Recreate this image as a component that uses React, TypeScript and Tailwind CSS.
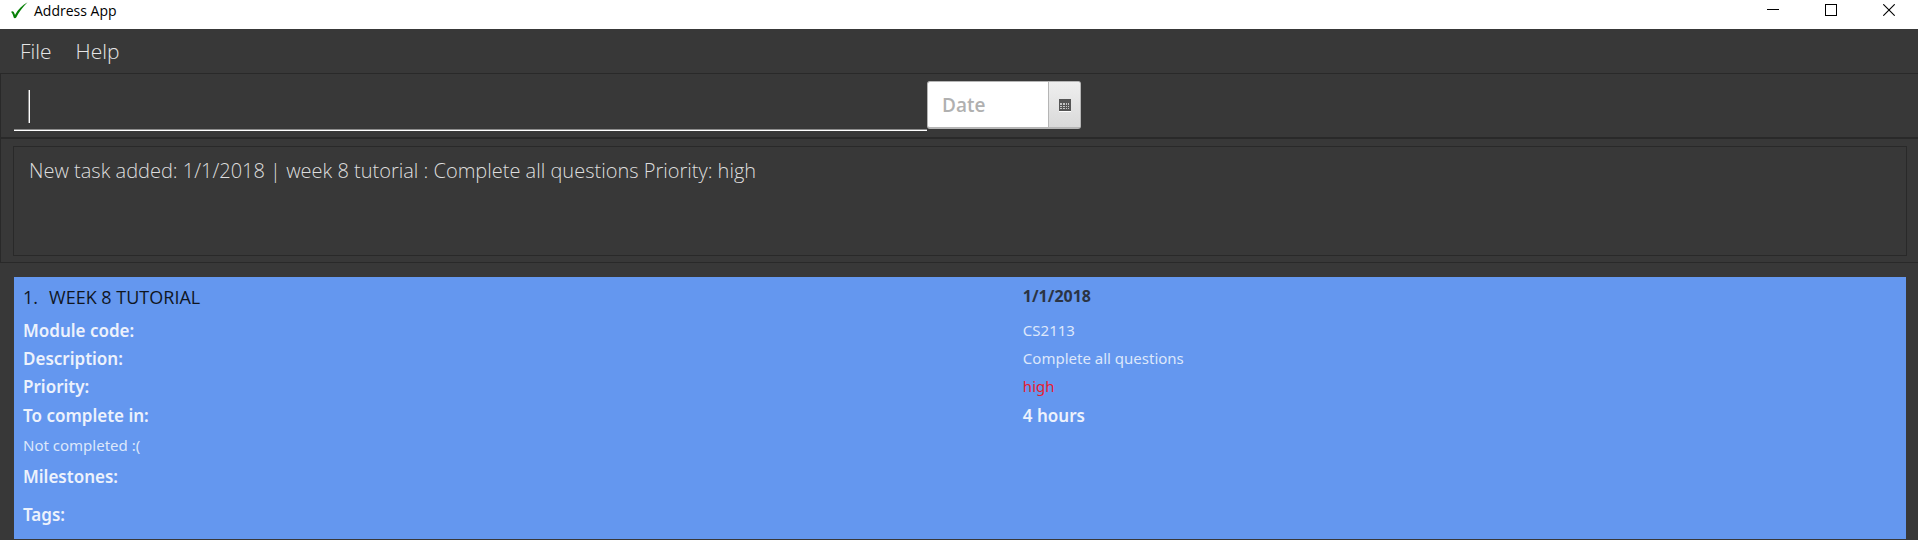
import { useState } from "react";

type Detail = {
  label: string;
  value?: string;
  rowClass: string;
  labelClass: string;
  valueClass: string;
};

const strong = "font-['Noto_Sans',sans-serif] text-[17px] font-semibold text-[#edf2fc]";
const plain = "font-['Noto_Sans',sans-serif] text-[15px] pb-0.5 text-[#dde7fb]";
const urgent = "font-['Noto_Sans',sans-serif] text-[15px] pb-0.5 text-[#e81c2e]";

const details: Detail[] = [
  { label: "Module code:", value: "CS2113", rowClass: "h-7", labelClass: strong, valueClass: plain },
  { label: "Description:", value: "Complete all questions", rowClass: "h-7", labelClass: strong, valueClass: plain },
  { label: "Priority:", value: "high", rowClass: "h-7", labelClass: strong, valueClass: urgent },
  { label: "To complete in:", value: "4 hours", rowClass: "h-[30px]", labelClass: strong, valueClass: strong },
  { label: "Not completed :(", rowClass: "h-[30px]", labelClass: plain, valueClass: plain },
  { label: "Milestones:", rowClass: "h-8", labelClass: strong, valueClass: strong },
  { label: "Tags:", rowClass: "h-11", labelClass: strong, valueClass: strong },
];

function TitleBar() {
  return (
    <header className="flex h-[29px] items-start justify-between bg-white text-black">
      <div className="flex h-[22px] items-center gap-1.5 pl-[10px]">
        <svg width="18" height="18" viewBox="0 0 18 18" aria-hidden="true">
          <path d="M1 10 C2.4 8.6 3.8 9 5 13 C8 7.5 12 3 17.6 0.2 C12.5 5.5 9 10 6.2 15.4 C5.6 16.4 4.1 16.4 3.7 15.4 C2.9 12.5 2.3 10.8 1 10 Z" fill="#078007" />
        </svg>
        <h1 className="text-sm leading-none">Address App</h1>
      </div>
      <div className="flex h-5">
        <button aria-label="Minimize" className="flex w-[58px] items-center justify-center">
          <svg width="12" height="12" viewBox="0 0 12 12" shapeRendering="crispEdges">
            <path d="M0 5.5H12" stroke="black" />
          </svg>
        </button>
        <button aria-label="Maximize" className="flex w-[58px] items-center justify-center">
          <svg width="12" height="12" viewBox="0 0 12 12" shapeRendering="crispEdges">
            <rect x="0.5" y="0.5" width="11" height="11" fill="none" stroke="black" />
          </svg>
        </button>
        <button aria-label="Close" className="flex w-[58px] items-center justify-center">
          <svg width="12" height="12" viewBox="0 0 12 12">
            <path d="M0.3 0.3L11.7 11.7M11.7 0.3L0.3 11.7" stroke="black" strokeWidth="1.1" />
          </svg>
        </button>
      </div>
    </header>
  );
}

function CalendarIcon() {
  return (
    <svg width="12" height="13" viewBox="0 0 12 13" shapeRendering="crispEdges" aria-hidden="true">
      <rect width="12" height="12" fill="#555555" />
      <rect y="12" width="12" height="1" fill="#ffffff" />
      {[4, 7, 9].map((y) =>
        [1, 4, 7, 9].map((x) => (
          <rect key={`${x}-${y}`} x={x} y={y} width={x === 9 || x === 7 ? 1 : 2} height={y === 4 ? 2 : 1} fill="#c4c4c4" />
        )),
      )}
    </svg>
  );
}

export default function App() {
  const [command, setCommand] = useState("");
  const [date, setDate] = useState("");

  return (
    <div className="min-h-screen bg-[#383838] font-['Open_Sans',sans-serif]">
      <TitleBar />
      <nav className="flex h-11 items-center gap-6 px-5 pt-px text-[21px] font-light text-[#e6e6e6]">
        <button>File</button>
        <button>Help</button>
      </nav>

      <section className="flex h-[65px] items-start border border-r-0 border-[#292929] pt-[7px] pl-[13px]">
        <div className="flex h-[50px] w-[48%] max-w-[913px] items-center border-b border-white pt-0.5 pl-3.5 shadow-[inset_0_-1px_0_#8c8c8c]">
          <span className="h-[33px] w-0.5 border-r border-white bg-[#8c8c8c]" />
          <input
            aria-label="Command"
            value={command}
            onChange={(e) => setCommand(e.target.value)}
            className="h-full flex-1 bg-transparent text-[21px] font-light text-white outline-none"
          />
        </div>
        <div className="flex h-12 w-[154px] overflow-hidden rounded-[3px] border border-b-2 border-[#b5b5b5] bg-white">
          <input
            aria-label="Date"
            placeholder="Date"
            value={date}
            onChange={(e) => setDate(e.target.value)}
            className="min-w-0 flex-1 pt-0.5 pl-3.5 text-[19px] font-semibold text-[#333333] outline-none placeholder:text-[#b0b0b0]"
          />
          <button
            aria-label="Pick a date"
            className="flex w-8 items-center justify-center border-l border-[#b5b5b5] bg-linear-to-b from-[#efefef] to-[#d9d9d9] pt-0.5"
          >
            <CalendarIcon />
          </button>
        </div>
      </section>

      <section className="border border-r-0 border-[#292929] pt-[7px] pr-[11px] pb-1.5 pl-3">
        <output className="block h-[110px] border border-[#292929] px-[15px] pt-2 text-xl leading-8 font-light text-[#dedede]">
          New task added: 1/1/2018 | week 8 tutorial : Complete all questions Priority: high
        </output>
      </section>

      <main className="pt-3.5 pr-3 pl-3.5">
        <article className="bg-[#6497ef] pt-1 pb-0.5 pl-[9px]">
          <div className="grid h-9 grid-cols-[53.1%_1fr] items-start leading-8">
            <h2 className="flex gap-[11px] text-lg leading-8 text-[#10161f]">
              <span>1.</span>
              <span>WEEK 8 TUTORIAL</span>
            </h2>
            <span className="text-base leading-[30px] font-bold text-[#2b3444]">1/1/2018</span>
          </div>
          {details.map((d) => (
            <div key={d.label} className={`grid grid-cols-[53.1%_1fr] items-center ${d.rowClass}`}>
              <span className={d.labelClass}>{d.label}</span>
              <span className={d.valueClass}>{d.value}</span>
            </div>
          ))}
        </article>
      </main>
    </div>
  );
}
